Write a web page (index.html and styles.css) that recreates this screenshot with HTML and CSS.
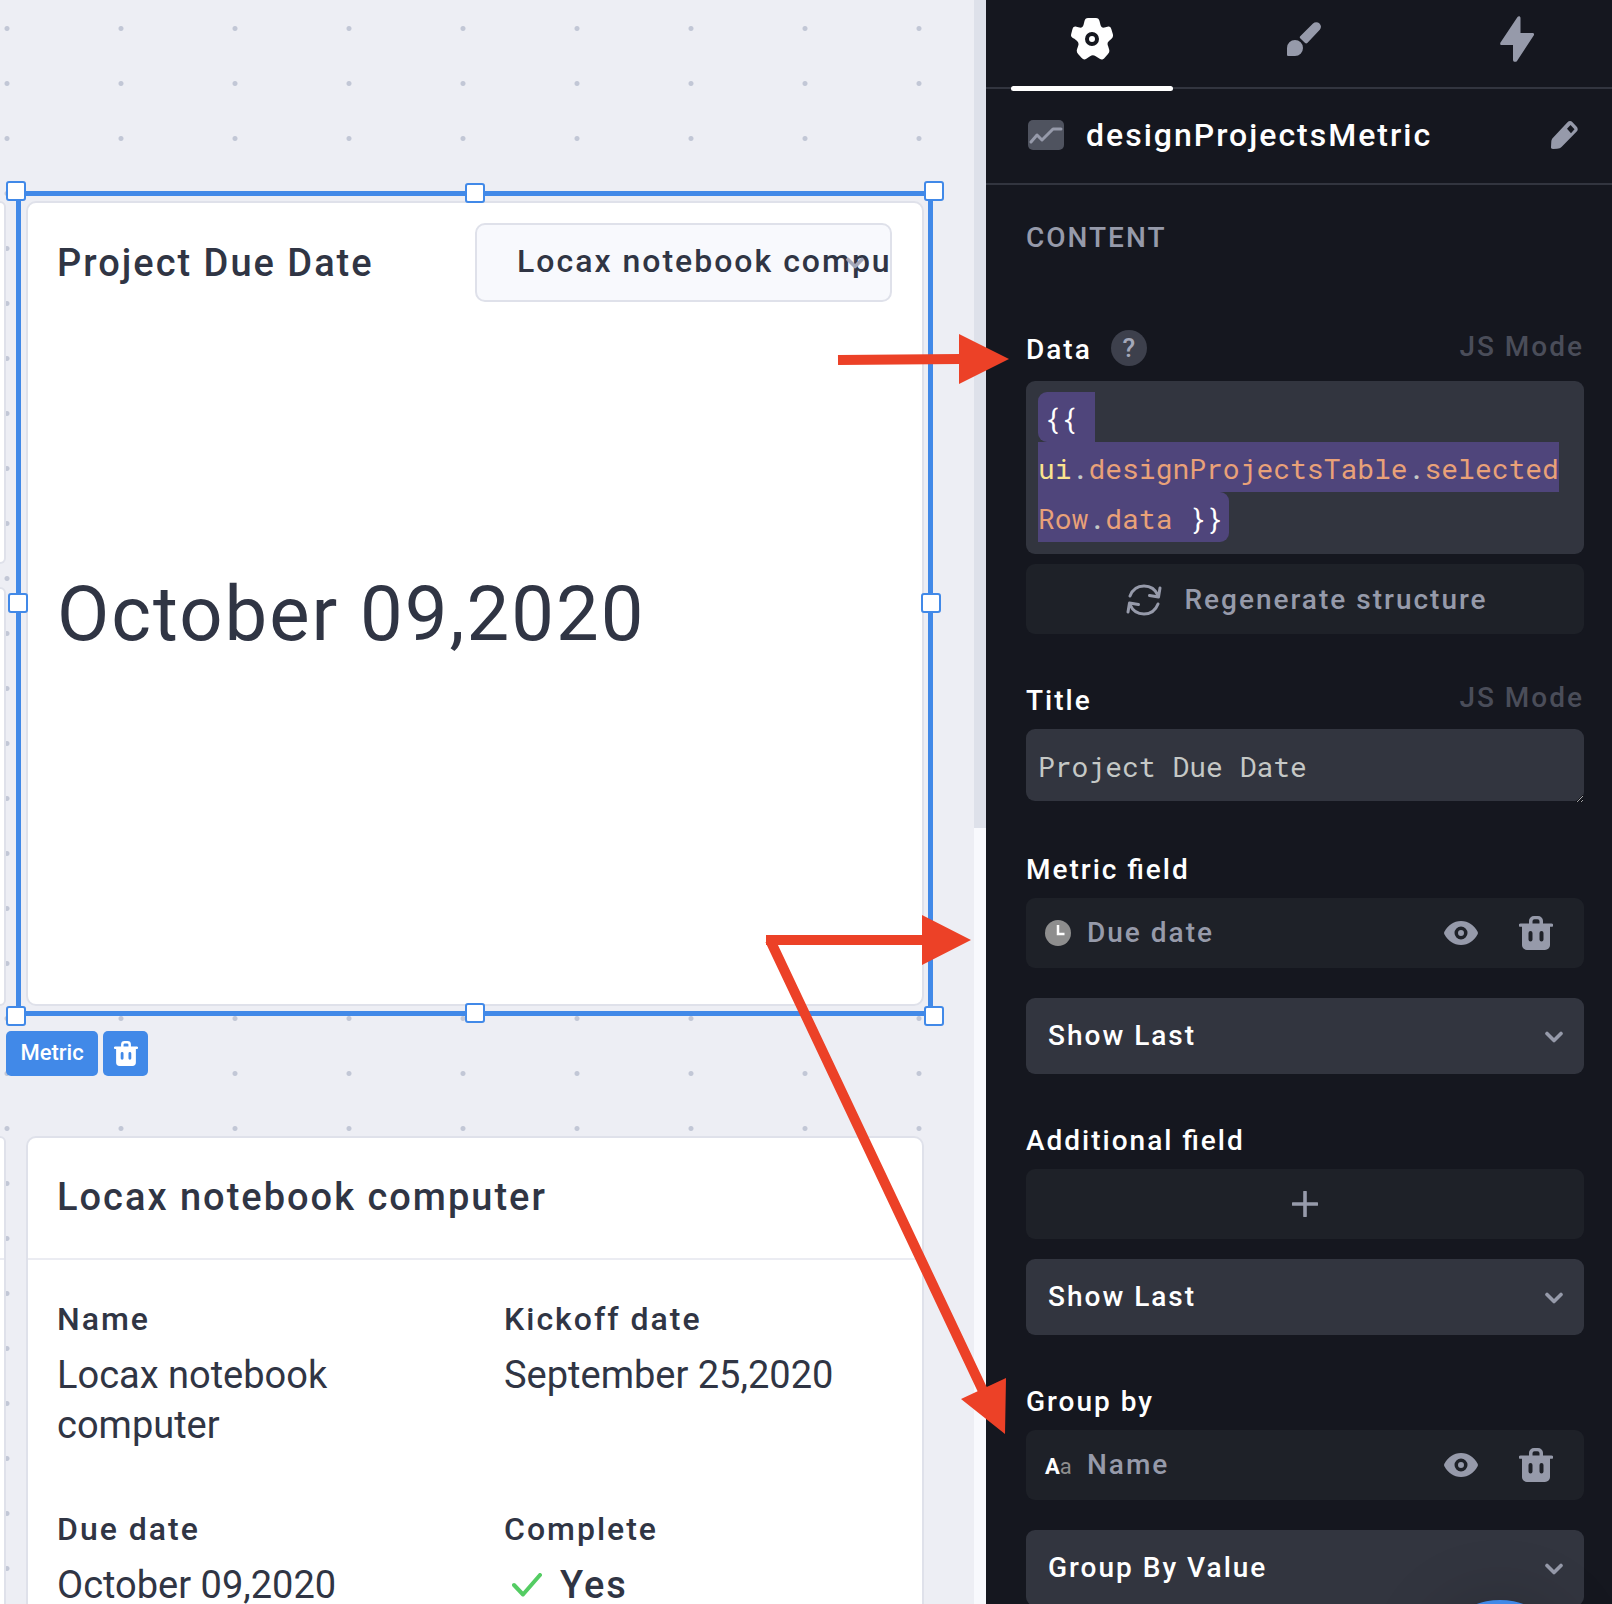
FILE: index.html
```html
<!DOCTYPE html>
<html lang="en">
<head>
<meta charset="utf-8">
<title>designProjectsMetric</title>
<meta name="viewport" content="width=device-width, initial-scale=1">
<link rel="stylesheet" href="styles.css">
</head>
<body>
<svg class="sprite" aria-hidden="true">
  <symbol id="i-trash" viewBox="0 0 34 36" preserveAspectRatio="none">
    <path fill="currentColor" fill-rule="evenodd" d="M10 8V5a5 5 0 0 1 5-5h4a5 5 0 0 1 5 5v3h8.500a1.500 1.500 0 0 1 0 3.500H31V31a5 5 0 0 1-5 5H8a5 5 0 0 1-5-5V11.500H1.500a1.500 1.500 0 0 1 0-3.500zM13.500 8h7V5.500a2 2 0 0 0-2-2h-3a2 2 0 0 0-2 2zM9.500 18v7a2 2 0 0 0 4 0v-7a2 2 0 0 0-4 0zm11 0v7a2 2 0 0 0 4 0v-7a2 2 0 0 0-4 0z"/>
  </symbol>
  <symbol id="i-eye" viewBox="0 0 34 24">
    <path fill="currentColor" fill-rule="evenodd" d="M17 0c7.500 0 13 4.500 16.500 10.500a3 3 0 0 1 0 3C30 19.500 24.500 24 17 24S4 19.500.500 13.500a3 3 0 0 1 0-3C4 4.500 9.500 0 17 0zm0 5.500a6.500 6.500 0 1 0 0 13 6.500 6.500 0 0 0 0-13zm0 3.500a3 3 0 1 1 0 6 3 3 0 0 1 0-6z"/>
  </symbol>
  <symbol id="i-chevron" viewBox="0 0 18 12">
    <path fill="none" stroke="currentColor" stroke-width="3.600" stroke-linecap="round" stroke-linejoin="round" d="M2 2.500l7 7 7-7"/>
  </symbol>
</svg>

<div class="app">
  <main class="canvas">
    <div class="column">
      <section class="card short"></section>
      <section class="card fill"></section>
    </div>

    <div class="selected">
      <section class="card metric">
        <header class="metric-head">
          <h2 class="card-title"><label for="metric-group">Project Due Date</label></h2>
          <div class="picker">
            <select id="metric-group" class="picker-select">
              <option>Locax notebook computer</option>
            </select>
            <svg class="picker-arrow"><use href="#i-chevron"/></svg>
          </div>
        </header>
        <p class="metric-value">October 09,2020</p>
      </section>
      <div class="outline">
        <i class="handle tl"></i><i class="handle tm"></i><i class="handle tr"></i>
        <i class="handle ml"></i><i class="handle mr"></i>
        <i class="handle bl"></i><i class="handle bm"></i><i class="handle br"></i>
      </div>
      <div class="tags">
        <button class="tag" type="button">Metric</button>
        <button class="tag tag-icon" type="button" aria-label="Delete"><svg class="tag-trash"><use href="#i-trash"/></svg></button>
      </div>
    </div>

    <section class="card"><div class="detail-head"></div></section>

    <section class="card">
      <header class="detail-head"><h2 class="card-title">Locax notebook computer</h2></header>
      <dl class="details">
        <div class="detail"><dt>Name</dt><dd>Locax notebook computer</dd></div>
        <div class="detail"><dt>Kickoff date</dt><dd>September 25,2020</dd></div>
        <div class="detail"><dt>Due date</dt><dd>October 09,2020</dd></div>
        <div class="detail"><dt>Complete</dt>
          <dd class="yes"><svg class="check" viewBox="0 0 30 24"><path d="M2 12l9 9.500L28 2"/></svg>Yes</dd></div>
      </dl>
    </section>
  </main>

  <div class="scroll"><div class="thumb"></div></div>

  <aside class="panel">
    <nav class="tabs">
      <button class="tab active" type="button" aria-label="Settings">
        <svg class="gear" viewBox="0 0 42 42"><path fill="currentColor" fill-rule="evenodd" d="M17 0h8c2 0 3 1.200 3.500 3l1 4c.500 2 2 3 4 2.500l3-.800c2-.500 3.200.300 3.800 2.300l1.500 5c.500 2 .200 3.300-1.300 4.800l-2.500 2.200c-1.500 1.300-1.800 3-1 4.700l1 3.300c.700 2 .400 3.600-1 5l-3.500 4c-1.400 1.600-3 2-4.800.800l-4-2.600c-2-1.300-3.800-1.300-5.600 0l-3.800 2.600c-1.700 1.200-3.200.800-4.600-.800l-3.600-4c-1.300-1.500-1.700-3-1-5l1.100-3.300c.700-1.800.300-3.400-1.100-4.700l-2.700-2.200C0 19.300-.300 18 .200 16l1.300-5c.600-2 1.900-2.800 3.900-2.300l3 .800c2 .500 3.600-.500 4.100-2.500l1-4C14 1.200 15 0 17 0zm4 14a7 7 0 1 0 0 14 7 7 0 0 0 0-14zm0 4a3 3 0 1 1 0 6 3 3 0 0 1 0-6z"/></svg>
      </button>
      <button class="tab" type="button" aria-label="Style">
        <svg class="brush" viewBox="0 0 34 34"><path fill="currentColor" d="M32.500 1.500a4.500 4.500 0 0 1 .300 6.300L20.300 21c-.700.700-1.600.600-2.200 0L13.200 16.300c-.600-.600-.600-1.400 0-2L26 1.500a4.600 4.600 0 0 1 6.500 0zM8 18a8 8 0 1 1 0 16H1.500C.500 34 0 33.500 0 32.500V26a8 8 0 0 1 8-8z"/></svg>
      </button>
      <button class="tab" type="button" aria-label="Actions">
        <svg class="bolt" viewBox="0 0 34 46"><path fill="currentColor" d="M17.500 1C18.500-.500 20.500 0 20.500 2v15h12c1.500 0 2 1.200 1.200 2.600L17 45c-1 1.500-4 1-4-1V29H1.500C0 29 0 27.500.500 26.500z"/></svg>
      </button>
    </nav>

    <header class="name-row">
      <svg class="chart" viewBox="0 0 36 30"><rect width="36" height="30" rx="5" fill="#4f535f"/><path d="M3 22l6-7 5 5L25 9h8" fill="none" stroke="#969aaa" stroke-width="3" stroke-linecap="round" stroke-linejoin="round"/></svg>
      <h1 class="name">designProjectsMetric</h1>
      <button class="plain" type="button" aria-label="Rename">
        <svg class="pencil" viewBox="0 0 27 28"><path fill="currentColor" fill-rule="evenodd" d="M16.500 1.300c1.500-1.700 3.500-1.700 5 0l4 4.200c1.600 1.700 1.600 3.500.2 5L11 25.500C9.500 27 8 27.700 6 27.800l-4 .2C.500 28-.100 27.400 0 26l.300-5.500c.100-1.500.700-2.700 1.700-3.800zM19.500 4L16 7.800l4 4.400 3.500-4z"/></svg>
      </button>
    </header>

    <form class="content">
      <h2 class="section-title">CONTENT</h2>

      <div class="field">
        <div class="field-head head-data">
          <label class="label" for="f-data">Data</label>
          <button class="help" type="button">?</button>
          <a class="js" href="#">JS Mode</a>
        </div>
        <div class="code" id="f-data" contenteditable="true" spellcheck="false"><span class="mark first">{{ </span><span class="mark"><b class="root">ui</b><b class="dot">.</b>designProjectsTable<b class="dot">.</b>selected</span><span class="mark last">Row<b class="dot">.</b>data <b class="brace">}}</b></span></div>
        <button class="soft regen" type="button">
          <svg class="cycle" viewBox="0 0 36 32"><path d="M4 12C6.500 5.500 12 2 18 2c6.500 0 11.500 3.500 14 9.500M34 4l-1.500 9-9-1.500M32 20c-2.500 6.500-8 10-14 10-6.500 0-11.500-3.500-14-9.500M2 28l1.500-9 9 1.500"/></svg>
          Regenerate structure
        </button>
      </div>

      <div class="field">
        <div class="field-head">
          <label class="label" for="f-title">Title</label>
          <a class="js" href="#">JS Mode</a>
        </div>
        <div class="input-wrap">
          <textarea class="input" id="f-title" rows="1">Project Due Date</textarea>
        </div>
      </div>

      <div class="field">
        <div class="field-head"><label class="label" for="f-metric">Metric field</label></div>
        <div class="soft item">
          <svg class="clock" viewBox="0 0 26 26"><circle cx="13" cy="13" r="13" fill="#8e8e8e"/><path d="M13 5v9h6.500" fill="none" stroke="#fff" stroke-width="2.500"/></svg>
          <span class="item-name">Due date</span>
          <button class="plain" type="button" aria-label="Show"><svg class="eye"><use href="#i-eye"/></svg></button>
          <button class="plain" type="button" aria-label="Remove"><svg class="trash"><use href="#i-trash"/></svg></button>
        </div>
        <div class="drop spaced">
          <select class="drop-select" id="f-metric"><option>Show Last</option></select>
          <svg class="drop-arrow"><use href="#i-chevron"/></svg>
        </div>
      </div>

      <div class="field">
        <div class="field-head"><label class="label" for="f-extra">Additional field</label></div>
        <button class="soft" type="button" aria-label="Add field"><svg class="plus" viewBox="0 0 26 26"><path d="M13 1v24M1 13h24"/></svg></button>
        <div class="drop">
          <select class="drop-select" id="f-extra"><option>Show Last</option></select>
          <svg class="drop-arrow"><use href="#i-chevron"/></svg>
        </div>
      </div>

      <div class="field">
        <div class="field-head"><label class="label" for="f-group">Group by</label></div>
        <div class="soft item">
          <span class="aa"><b>A</b>a</span>
          <span class="item-name">Name</span>
          <button class="plain" type="button" aria-label="Show"><svg class="eye"><use href="#i-eye"/></svg></button>
          <button class="plain" type="button" aria-label="Remove"><svg class="trash"><use href="#i-trash"/></svg></button>
        </div>
        <div class="drop spaced">
          <select class="drop-select" id="f-group"><option>Group By Value</option></select>
          <svg class="drop-arrow"><use href="#i-chevron"/></svg>
        </div>
      </div>
    </form>
    <button class="chat" type="button" aria-label="Chat"></button>
  </aside>

  <svg class="arrows" viewBox="0 0 260 1120" aria-hidden="true">
    <path class="shaft" d="M86 35l122-1M14 615h158M18 615L232 1068"/>
    <path class="head" d="M207 9v50l50-25zM170 590v50l49-25zM209 1074l45-21-1 56z"/>
  </svg>
</div>
</body>
</html>
```
FILE: styles.css
```css
* { box-sizing: border-box; }

:root {
  --blue: #4189e8;
  --ink: #303544;
  --line: #dfe1ea;
  --panel: #15171f;
  --soft: #1e2128;
  --control: #32353f;
  --muted: #969aaa;
}

body {
  margin: 0;
  font-family: Roboto, "Liberation Sans", sans-serif;
  color: var(--ink);
}

h1, h2, p, dl, dd { margin: 0; font-weight: 500; }
button, select, textarea { font: inherit; letter-spacing: inherit; border: 0; margin: 0; padding: 0; }
button { cursor: pointer; }
svg { display: block; flex: none; }
.sprite { position: absolute; width: 0; height: 0; }

.app {
  position: relative;
  display: flex;
  height: 100vh;
  overflow: hidden;
}

/* Canvas */
.canvas {
  flex: 1;
  min-width: 0;
  display: grid;
  grid-template-columns: 6px minmax(0, 1fr);
  grid-template-rows: 805px 600px;
  gap: 130px 20px;
  padding: 201px 50px 0 0;
  background: #edeef4 radial-gradient(circle, #c2c7d6 2px, transparent 3px) -50px 1px / 114px 55px;
}

.column { display: flex; flex-direction: column; gap: 23px; }

.card {
  background: #fff;
  border: 2px solid var(--line);
  border-radius: 10px;
}
.column .card, .canvas > .card:nth-child(3) {
  border-left: 0;
  border-radius: 0 10px 10px 0;
}
.short { height: 363px; }
.fill { flex: 1; }

.selected { position: relative; }
.metric { height: 100%; }
.metric-head {
  display: flex;
  align-items: center;
  justify-content: space-between;
  padding: 20px 30px 0 29px;
}
.card-title {
  font-size: 38px;
  line-height: 46px;
  letter-spacing: 2px;
}
.picker { position: relative; width: 417px; }
.picker-select {
  display: block;
  width: 100%;
  height: 79px;
  padding: 0 0 4px 40px;
  appearance: none;
  color: var(--ink);
  background: #f8f9fd;
  border: 2px solid var(--line);
  border-radius: 10px;
  font-size: 32px;
  font-weight: 500;
  letter-spacing: 2px;
}
.picker-arrow {
  position: absolute;
  right: 27px;
  top: 34px;
  width: 20px;
  height: 12px;
  color: #a4a8b9;
  pointer-events: none;
}
.metric-value {
  padding: 264px 29px 0;
  font-size: 76px;
  line-height: 96px;
  font-weight: 400;
  letter-spacing: 2px;
}

.outline {
  position: absolute;
  inset: -10px -9px -10px -10px;
  border: 5px solid var(--blue);
  pointer-events: none;
}
.handle {
  position: absolute;
  width: 20px;
  height: 20px;
  background: #fff;
  border: 2px solid var(--blue);
  border-radius: 3px;
}
.tl, .tr { top: -15px; }
.bl, .br { bottom: -15px; }
.tl, .bl { left: -15px; }
.tr, .br { right: -16px; }
.tm { top: -13px; }
.bm { bottom: -12px; }
.tm, .bm { left: calc(50% - 10px); }
.ml { left: -13px; }
.mr { right: -13px; }
.ml, .mr { top: calc(50% - 11px); }

.tags {
  position: absolute;
  top: 830px;
  left: -20px;
  display: flex;
  gap: 5px;
}
.tag {
  display: grid;
  place-items: center;
  min-width: 92px;
  height: 45px;
  padding: 0 14px 2px;
  color: #fff;
  background: var(--blue);
  border-radius: 5px;
  font-size: 22px;
  font-weight: 500;
}
.tag-icon { min-width: 45px; padding: 0; }
.tag-trash { width: 24px; height: 25px; }

.detail-head {
  height: 122px;
  padding: 36px 29px 0;
  border-bottom: 2px solid #ebecf2;
}
.canvas > .card:nth-child(3) .detail-head { padding: 0; }
.details { display: grid; grid-template-columns: 1fr 1fr; }
.detail {
  min-height: 210px;
  padding: 39px 29px 0;
}
.detail dt {
  font-size: 32px;
  line-height: 40px;
  font-weight: 500;
  letter-spacing: 2px;
}
.detail dd {
  padding-top: 11px;
  font-size: 38px;
  line-height: 50px;
  font-weight: 400;
}
.detail .yes {
  display: flex;
  align-items: center;
  gap: 18px;
  padding-left: 8px;
  font-weight: 500;
  letter-spacing: 2px;
}
.check { width: 30px; height: 24px; fill: none; stroke: #54cc63; stroke-width: 4; stroke-linecap: round; stroke-linejoin: round; }

.scroll { flex: none; width: 12px; background: #f8f9fd; }
.thumb { height: 828px; background: #dee1ea; }

/* Settings panel */
.panel {
  position: relative;
  flex: none;
  width: 626px;
  overflow: hidden;
  background: var(--panel);
  color: #fff;
  letter-spacing: 2px;
}
.tabs {
  display: grid;
  grid-template-columns: repeat(3, 1fr);
  gap: 50px;
  height: 89px;
  padding: 0 14px 0 25px;
  border-bottom: 2px solid var(--control);
}
.tab {
  position: relative;
  display: grid;
  place-items: center;
  padding-bottom: 10px;
  background: none;
  color: var(--muted);
}
.tab.active { color: #fff; }
.tab.active::after {
  content: "";
  position: absolute;
  left: 0;
  right: 0;
  bottom: -4px;
  height: 5px;
  border-radius: 3px;
  background: #fff;
}
.gear { width: 42px; height: 42px; }
.brush { width: 34px; height: 34px; }
.bolt { width: 34px; height: 46px; }

.name-row {
  display: flex;
  align-items: center;
  height: 96px;
  padding: 0 34px 2px 42px;
  border-bottom: 2px solid var(--control);
}
.chart { width: 36px; height: 30px; }
.name {
  flex: 1;
  padding-left: 22px;
  font-size: 32px;
  line-height: 40px;
}
.plain { background: none; color: var(--muted); }
.pencil { width: 27px; height: 28px; }

.content {
  padding: 36px 28px 0 40px;
  font-size: 28px;
  line-height: 34px;
  font-weight: 500;
}
.section-title {
  margin-bottom: 75px;
  font-size: 28px;
  line-height: 34px;
  color: var(--muted);
}
.field { margin-bottom: 47px; }
.field-head {
  display: flex;
  align-items: flex-end;
  height: 37px;
  margin-bottom: 11px;
}
.label { font-feature-settings: "liga" 1; }
.head-data { margin-bottom: 14px; }
.help {
  width: 36px;
  height: 36px;
  margin-left: 19px;
  align-self: flex-start;
  border-radius: 50%;
  background: #3d404c;
  color: #a4a8b9;
  font-size: 26px;
  line-height: 36px;
  letter-spacing: 0;
}
.js {
  align-self: flex-start;
  margin-left: auto;
  color: #4a4d59;
  text-decoration: none;
}

.code, .input {
  font-family: "Roboto Mono", "Liberation Mono", monospace;
  font-size: 28px;
  font-weight: 400;
  letter-spacing: 0;
}
.code, .input-wrap {
  background: var(--control);
  border-radius: 9px;
}
.code {
  display: flex;
  flex-direction: column;
  align-items: flex-start;
  height: 173px;
  margin-bottom: 10px;
  padding: 11px 12px;
  color: #e9a178;
}
.mark {
  height: 50px;
  line-height: 54px;
  white-space: pre;
  background: #4f457b;
}
.mark b { font-weight: 400; }
.first { padding: 0 1px 0 6px; color: #fff; border-radius: 9px 0 0 9px; }
.last { padding-right: 6px; border-radius: 0 9px 9px 0; }
.root { color: #fae38e; }
.dot { color: #c5c8c6; }
.brace { color: #fff; }

.soft {
  display: flex;
  align-items: center;
  justify-content: center;
  width: 100%;
  height: 70px;
  color: var(--muted);
  background: var(--soft);
  border-radius: 9px;
}
.regen { gap: 22px; padding: 2px 0 0 4px; }
.cycle { width: 36px; height: 32px; fill: none; stroke: currentColor; stroke-width: 3; stroke-linecap: round; stroke-linejoin: round; }
.plus { width: 26px; height: 26px; fill: none; stroke: currentColor; stroke-width: 3.6; stroke-linecap: round; }

.input-wrap { height: 72px; margin-bottom: 49px; }
.input {
  display: block;
  width: 100%;
  height: 74px;
  padding: 21px 12px 0;
  line-height: 34px;
  color: #c5c8c6;
  background: none;
  resize: vertical;
  overflow: hidden;
}

.item { padding: 0 31px 0 19px; }
.item-name { flex: 1; padding-left: 16px; }
.clock { width: 26px; height: 26px; }
.eye { width: 34px; height: 24px; margin-right: 41px; }
.trash { width: 34px; height: 34px; }
.aa {
  width: 27px;
  margin-right: -1px;
  padding-top: 3px;
  font-size: 22px;
  font-weight: 400;
  letter-spacing: 0;
  color: #8e8e8e;
}
.aa b { color: #fff; font-weight: 700; }

.drop { position: relative; margin-top: 20px; }
.drop.spaced { margin-top: 30px; }
.drop-select {
  display: block;
  width: 100%;
  height: 76px;
  padding: 0 40px 0 22px;
  appearance: none;
  color: #fff;
  background: var(--control);
  border-radius: 9px;
}
.drop-arrow {
  position: absolute;
  right: 21px;
  top: 33px;
  width: 18px;
  height: 12px;
  color: var(--muted);
  pointer-events: none;
}

.chat {
  position: absolute;
  right: 42px;
  bottom: -136px;
  width: 140px;
  height: 140px;
  border-radius: 50%;
  background: var(--blue);
  box-shadow: 0 0 70px rgba(0, 0, 0, 0.16);
}

/* Annotation arrows that point from the canvas to the panel */
.arrows {
  position: absolute;
  top: 325px;
  right: 600px;
  width: 260px;
  height: 1120px;
  pointer-events: none;
}
.shaft { fill: none; stroke: #ec4127; stroke-width: 10; }
.head { fill: #ec4127; }
```
